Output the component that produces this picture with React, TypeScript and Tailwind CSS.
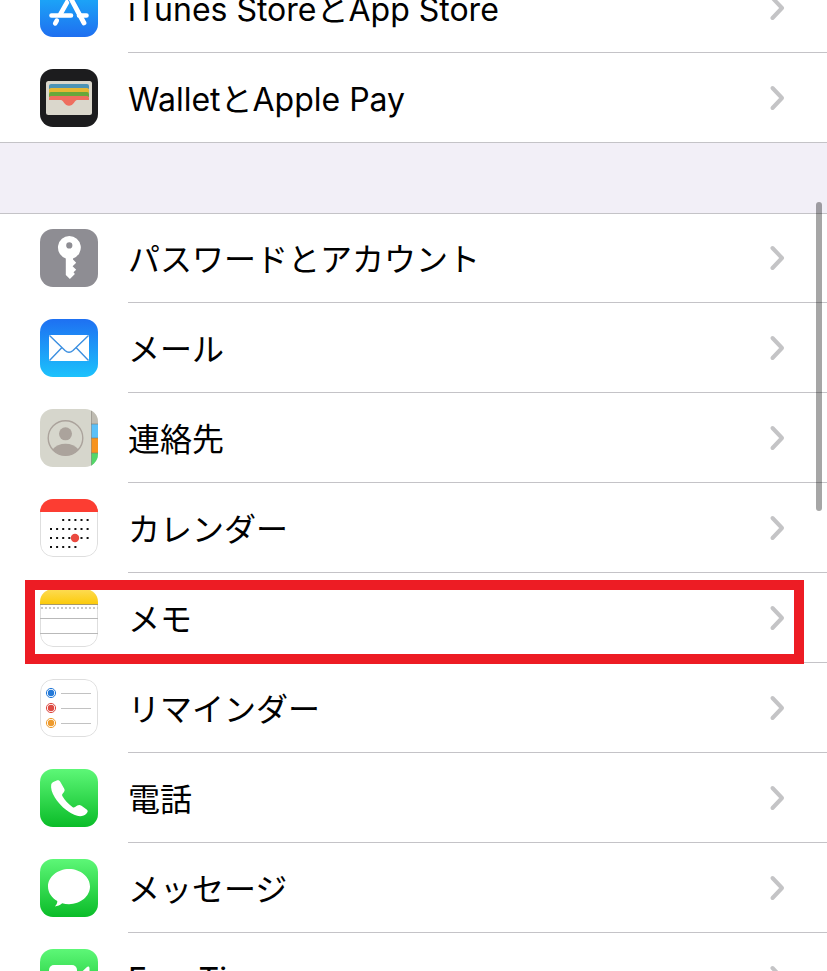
import type { ReactNode } from "react";
import clsx from "clsx";

interface SettingsItem {
  id: string;
  label: string;
  icon: ReactNode;
  highlighted?: boolean;
}

function AppStoreIcon() {
  return (
    <>
      <rect width="58" height="58" fill="url(#app-store-bg)" />
      <g stroke="#fff" strokeWidth="4.6" strokeLinecap="round" fill="none">
        <path d="M11.500 36.500H31M39 36.500H46.500" />
        <path d="M34 11 20.500 35" />
        <path d="M16.800 41.600 15.200 44.400" />
      </g>
      {/* the right leg lies over the left one, with a thin gap between them */}
      <path d="m25.500 10 13 23" stroke="#1f8df6" strokeWidth="6.600" />
      <path d="M26 10.500 44 44" stroke="#fff" strokeWidth="4.800" strokeLinecap="round" />
    </>
  );
}

function WalletIcon() {
  return (
    <>
      <rect width="58" height="58" fill="#1c1c1e" />
      <rect x="6" y="12" width="46" height="34" rx="2.5" fill="#dad7cc" />
      <path d="M9 20v-3a2 2 0 0 1 2-2h36a2 2 0 0 1 2 2v3z" fill="#4d94b5" />
      <path d="M9 24v-3a2 2 0 0 1 2-2h36a2 2 0 0 1 2 2v3z" fill="#e5b834" />
      <path d="M9 28v-3a2 2 0 0 1 2-2h36a2 2 0 0 1 2 2v3z" fill="#67a83b" />
      <path d="M9 31v-2a2 2 0 0 1 2-2h36a2 2 0 0 1 2 2v2z" fill="#ee6e5f" />
      <path d="M18 30.500c3.500 0 4.500 1 6 3.200 1.300 2.100 3 3 5 3s3.700-.9 5-3c1.500-2.200 2.500-3.200 6-3.200z" fill="#ee6e5f" />
    </>
  );
}

function KeyIcon() {
  return (
    <>
      <rect width="58" height="58" fill="#8e8d93" />
      <path
        fillRule="evenodd"
        d="M29.300 7a11.500 11.500 0 0 1 3.700 22.400v1.100l3.200 3.300-3.600 3.400 3.600 3.600-2.700 2.500 1.400 1.700-5 5-4.100-4V29.400A11.500 11.500 0 0 1 29.300 7zm0 6.300a3.100 3.100 0 1 0 0 6.200 3.100 3.100 0 0 0 0-6.200z"
        fill="#fff"
      />
    </>
  );
}

function MailIcon() {
  return (
    <>
      <rect width="58" height="58" fill="url(#mail-bg)" />
      <rect x="9" y="16" width="40" height="26" rx="1" fill="#fff" />
      <path
        d="m9.500 16.500 15.500 15c2.500 2.300 5.500 2.300 8 0l15.500-15M9.500 41.500 21.500 29M48.500 41.500 36.500 29"
        stroke="#3c8fe0"
        strokeWidth="1.400"
        fill="none"
      />
    </>
  );
}

function ContactsIcon() {
  return (
    <>
      <rect width="58" height="58" fill="#d6d6cc" />
      <rect x="51" width="7" height="15" fill="#bfbcb2" />
      <rect x="51" y="15" width="7" height="14" fill="#5bc0f8" />
      <rect x="51" y="29" width="7" height="15" fill="#f7931e" />
      <rect x="51" y="44" width="7" height="14" fill="#53d769" />
      <path d="M51.500 0v58" stroke="#8e8b83" strokeOpacity=".6" />
      <path d="M51 15h7M51 29h7M51 44h7" stroke="#7b7a70" strokeOpacity=".6" />
      <circle cx="25.500" cy="29" r="17.300" fill="none" stroke="#aba39c" strokeWidth="1.400" />
      <circle cx="25.500" cy="24.800" r="6.500" fill="#aba39c" />
      <path d="M12.500 40.500c3-3.800 7.700-5.700 13-5.700s10 1.900 13 5.700a17.300 17.300 0 0 1-26 0z" fill="#aba39c" />
    </>
  );
}

const calendarDots = [
  { y: 21, from: 2, to: 6 },
  { y: 30, from: 0, to: 6 },
  { y: 39, from: 0, to: 6 },
  { y: 48, from: 0, to: 4 },
];

function CalendarIcon() {
  return (
    <>
      <IconOutline />
      <path d="M0 0h58v13H0z" fill="#fc3d32" />
      {calendarDots.map(({ y, from, to }) =>
        Array.from({ length: to - from + 1 }, (_, i) => (
          <rect key={`${y}-${i}`} x={10 + (from + i) * 6.1} y={y - 1} width="2" height="2" fill="#111" />
        ))
      )}
      <circle cx="35" cy="39" r="4.200" fill="#ea4a40" />
    </>
  );
}

function NotesIcon() {
  return (
    <>
      <IconOutline />
      <rect width="58" height="15" fill="url(#notes-bg)" />
      <path d="M0 15.500h58" stroke="#a79a6c" />
      <path d="M1 19h57" stroke="#c8c8c8" strokeWidth="2" strokeDasharray="2 2" />
      <path d="M0 29.500h58M0 44.500h58" stroke="#b9b9b9" />
    </>
  );
}

const reminderDots = [
  { y: 14, color: "#2479d8" },
  { y: 29, color: "#dd4b43" },
  { y: 44, color: "#ee9b2d" },
];

function RemindersIcon() {
  return (
    <>
      <IconOutline />
      {reminderDots.map(({ y, color }) => (
        <g key={y}>
          <circle cx="11" cy={y} r="4.600" fill="none" stroke={color} />
          <circle cx="11" cy={y} r="3.200" fill={color} />
          <path d={`M21 ${y + 0.5}h30`} stroke="#c2c2c2" />
        </g>
      ))}
    </>
  );
}

function PhoneIcon() {
  return (
    <>
      <rect width="58" height="58" fill="url(#green-bg)" />
      <path
        d="M11.200 15.500c-.6 3.500.6 8 3.500 12.700 4.500 7.300 11.500 14 19.500 17.600 5 2.200 9.500 1.700 12.300-1.300 1.500-1.700 1.700-2.800.2-4l-5.200-3.700c-1.600-1.100-2.800-1.100-4.200-.2l-2.300 1.500c-.9.600-1.700.5-2.600-.2-4.200-3.200-7.500-6.700-9.900-10.700-.6-1-.5-1.700.1-2.500l1.200-1.500c1-1.300 1.100-2.300.3-3.800l-3.700-6.500c-.9-1.700-2.500-2-4.200-1.200-2.700 1-4.500 1.700-5 3.800z"
        fill="#fff"
      />
    </>
  );
}

function MessagesIcon() {
  return (
    <>
      <rect width="58" height="58" fill="url(#green-bg)" />
      <path
        d="M29 10c11.600 0 21 7.900 21 17.600s-9.400 17.600-21 17.600c-2.400 0-4.700-.3-6.800-.9-2 1.800-4.700 3-7.400 3.200 1.600-1.500 2.600-3.300 2.500-5.400C11.600 38.900 8 33.600 8 27.600 8 17.900 17.400 10 29 10z"
        fill="#fff"
      />
    </>
  );
}

function FaceTimeIcon() {
  return (
    <>
      <rect width="58" height="58" fill="url(#green-bg)" />
      <rect x="9" y="16" width="28" height="26" rx="5" fill="#fff" />
      <path d="M39 25.500 47 18c1-1 2.500-.5 2.500 1v20c0 1.500-1.500 2-2.500 1l-8-7.500z" fill="#fff" />
    </>
  );
}

function IconOutline() {
  return <rect x=".5" y=".5" width="57" height="57" rx="12.500" fill="#fff" stroke="#dedede" />;
}

// Gradients shared by the icons through their ids
function IconGradients() {
  return (
    <svg className="absolute size-0" aria-hidden="true">
      <defs>
        <linearGradient id="app-store-bg" x2="0" y2="1">
          <stop offset="0" stopColor="#1ac0fb" />
          <stop offset="1" stopColor="#1f6ff0" />
        </linearGradient>
        <linearGradient id="mail-bg" x2="0" y2="1">
          <stop offset="0" stopColor="#1e70f2" />
          <stop offset="1" stopColor="#1cc2fc" />
        </linearGradient>
        <linearGradient id="notes-bg" x2="0" y2="1">
          <stop offset="0" stopColor="#fddc55" />
          <stop offset="1" stopColor="#fccb0c" />
        </linearGradient>
        <linearGradient id="green-bg" x2="0" y2="1">
          <stop offset="0" stopColor="#5df777" />
          <stop offset="1" stopColor="#0abc28" />
        </linearGradient>
      </defs>
    </svg>
  );
}

const storeItems: SettingsItem[] = [
  { id: "itunes", label: "iTunes StoreとApp Store", icon: <AppStoreIcon /> },
  { id: "wallet", label: "WalletとApple Pay", icon: <WalletIcon /> },
];

const appItems: SettingsItem[] = [
  { id: "passwords", label: "パスワードとアカウント", icon: <KeyIcon /> },
  { id: "mail", label: "メール", icon: <MailIcon /> },
  { id: "contacts", label: "連絡先", icon: <ContactsIcon /> },
  { id: "calendar", label: "カレンダー", icon: <CalendarIcon /> },
  { id: "notes", label: "メモ", icon: <NotesIcon />, highlighted: true },
  { id: "reminders", label: "リマインダー", icon: <RemindersIcon /> },
  { id: "phone", label: "電話", icon: <PhoneIcon /> },
  { id: "messages", label: "メッセージ", icon: <MessagesIcon /> },
  { id: "facetime", label: "FaceTime", icon: <FaceTimeIcon /> },
];

function SettingsRow({ item, last }: { item: SettingsItem; last: boolean }) {
  return (
    <li className="relative">
      <a href={`#${item.id}`} className="flex pl-10">
        <svg viewBox="0 0 58 58" className="mt-4 mr-[30px] size-[58px] shrink-0 rounded-[13px]" aria-hidden="true">
          {item.icon}
        </svg>
        <span
          className={clsx(
            "flex flex-1 items-center justify-between pr-[42px]",
            last ? "h-[89px]" : "h-[90px] border-b border-[#c4c3c7]"
          )}
        >
          <span className="pt-1 text-[32px] leading-10 text-black">{item.label}</span>
          <svg viewBox="0 0 16 26" className="h-[26px] w-4 shrink-0" aria-hidden="true">
            <path
              d="M3.500 3 13 13 3.500 23"
              fill="none"
              stroke="#c4c4c6"
              strokeWidth="4"
              strokeLinecap="round"
              strokeLinejoin="round"
            />
          </svg>
        </span>
      </a>
      {item.highlighted && (
        <div className="pointer-events-none absolute top-[7px] right-[23px] left-[25px] z-10 h-[84px] border-[10px] border-[#ed1c24]" />
      )}
    </li>
  );
}

function SettingsGroup({ items, className }: { items: SettingsItem[]; className?: string }) {
  return (
    <ul className={className}>
      {items.map((item, index) => (
        <SettingsRow key={item.id} item={item} last={index === items.length - 1} />
      ))}
    </ul>
  );
}

export default function App() {
  return (
    <main className="relative h-screen overflow-hidden bg-white font-['Inter','Noto_Sans_CJK_JP',sans-serif]">
      <IconGradients />
      {/* the list is scrolled part of the way down */}
      <div className="-mt-[37px]">
        <SettingsGroup items={storeItems} className="border-b border-[#c4c3c7]" />
        <div className="h-[71px] border-b border-[#c4c3c7] bg-[#f2eff7]" />
        <SettingsGroup items={appItems} className="-mt-px" />
      </div>
      <div className="absolute top-[202px] right-[5px] h-[309px] w-1.5 rounded-full bg-black/35" />
    </main>
  );
}
